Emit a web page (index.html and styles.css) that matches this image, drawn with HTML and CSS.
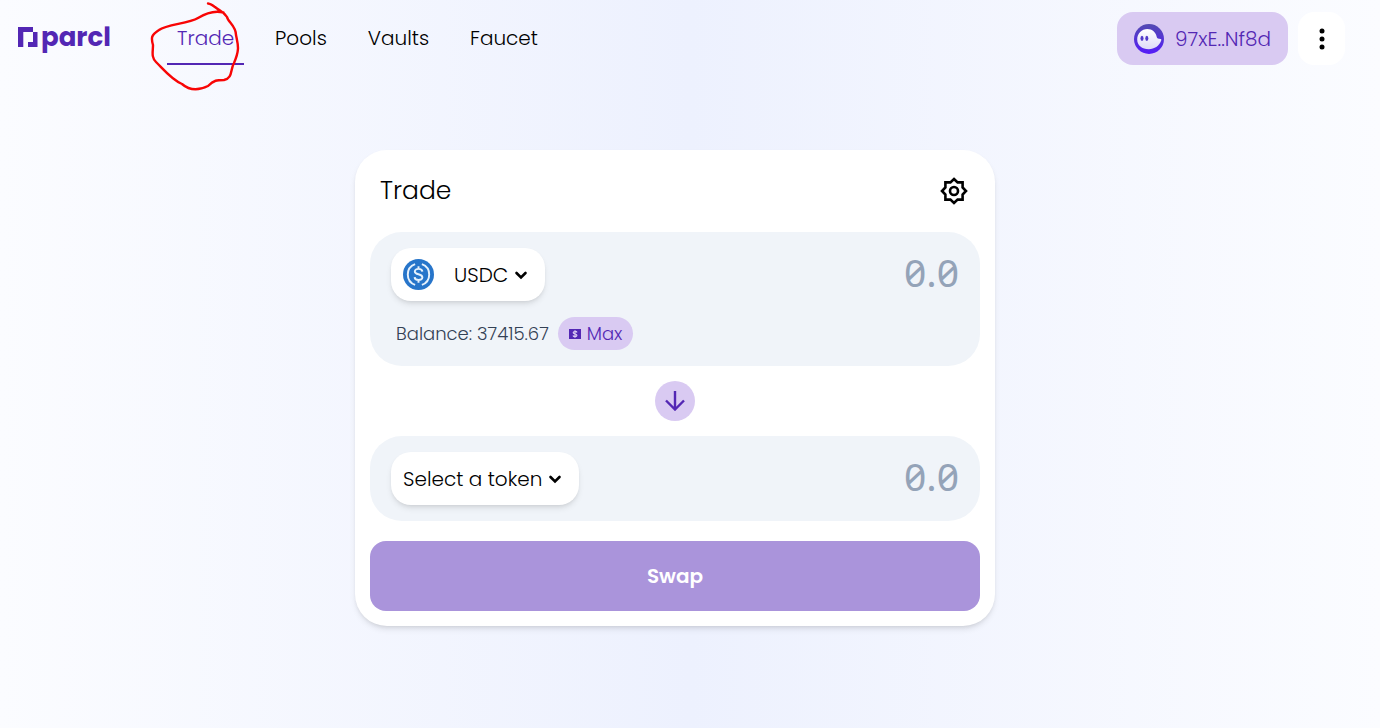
FILE: index.html
```html
<!DOCTYPE html>
<html lang="en">
<head>
<meta charset="utf-8">
<meta name="viewport" content="width=device-width, initial-scale=1">
<title>Parcl – Trade</title>
<link rel="stylesheet" href="styles.css">
</head>
<body>
<header class="topbar">
  <a class="logo" href="#" aria-label="parcl">
    <svg class="logo-mark" viewBox="0 0 20 20" aria-hidden="true"><path d="M0 0H15V5H5.300V20H0Z"/><path d="M15 5H19.500V20H10V15H15Z"/></svg>
    <span>parcl</span>
  </a>
  <nav class="nav">
    <a class="nav-link active" href="#">Trade</a>
    <a class="nav-link" href="#">Pools</a>
    <a class="nav-link" href="#">Vaults</a>
    <a class="nav-link" href="#">Faucet</a>
  </nav>
  <div class="account">
    <button class="wallet" type="button">
      <svg class="wallet-icon" viewBox="0 0 30 30" aria-hidden="true">
        <defs>
          <linearGradient id="disc" x1="0" y1="0" x2="0" y2="1"><stop offset="0" stop-color="#534bb1"/><stop offset="1" stop-color="#551bf9"/></linearGradient>
          <linearGradient id="ghost" x1="0" y1="0" x2="0" y2="1"><stop offset="0" stop-color="#ffffff"/><stop offset="1" stop-color="#dedaf8"/></linearGradient>
        </defs>
        <circle cx="15" cy="15" r="15" fill="url(#disc)"/>
        <path fill="url(#ghost)" d="M3.200 15.500C3.200 9.300 7.800 5 13.300 5C18.300 5 22 8.500 22.600 12.600C22.900 14.600 24.300 15 26.700 15C27.500 15 27.500 16 27 17C25.200 21.800 20.500 25.200 14.800 25.200C8 25.200 3.200 21.500 3.200 15.500Z"/>
        <ellipse cx="8" cy="14.300" rx="1.500" ry="2.600" fill="#5139c9"/>
        <ellipse cx="12.800" cy="14.300" rx="1.500" ry="2.600" fill="#5139c9"/>
      </svg>
      <span>97xE..Nf8d</span>
    </button>
    <button class="more" type="button" aria-label="More options">
      <svg viewBox="0 0 6 22" aria-hidden="true"><circle cx="3" cy="3" r="2.500"/><circle cx="3" cy="11" r="2.500"/><circle cx="3" cy="19" r="2.500"/></svg>
    </button>
  </div>
</header>

<svg class="scribble" viewBox="0 0 95 92" aria-hidden="true"><path d="M58 1.500C63 2 66 7 73 10.500M73.500 10.500C64 8 56 11 48 16C38 22 17 22 9 28C1 33 1 36 3 43C3 50 1 55 6 60C14 68 22 78 32 82C40 89 50 88 58 84C64 78 67 78 74 78C83 76 80 68 84 61C90 47 88 43 86 33C86 24 78 20 77 15C74 10 70 9 65 5"/></svg>

<main class="page">
  <form class="card">
    <div class="card-head">
      <h1 class="title">Trade</h1>
      <button class="settings" type="button" aria-label="Settings">
        <svg viewBox="0 0 28 28" aria-hidden="true"><path d="M14 2L17.600 5.400H22.600V10.400L26 14L22.600 17.600V22.600H17.600L14 26L10.400 22.600H5.400V17.600L2 14L5.400 10.400V5.400H10.400Z"/><circle cx="14" cy="14" r="4"/></svg>
      </button>
    </div>

    <section class="panel">
      <div class="row">
        <button class="token" type="button">
          <svg class="coin" viewBox="0 0 32 32" aria-hidden="true">
            <circle cx="16" cy="16" r="16" fill="#2775ca"/>
            <g fill="none" stroke="#e6f1fc" stroke-width="2"><path d="M12.500 5.200A11.500 11.500 0 0 0 12.500 26.800M19.500 5.200A11.500 11.500 0 0 1 19.500 26.800"/><path d="M20 13C19.700 9.300 12.200 9.300 12.200 12.800C12.200 17 20 14.500 20 19C20 22.700 12.200 22.600 12 18.700M16 7.500V10.500M16 21.500V24.500"/></g>
          </svg>
          <span>USDC</span>
          <svg class="chevron" viewBox="0 0 14 10" aria-hidden="true"><path d="M2.500 3L7 7.500L11.500 3"/></svg>
        </button>
        <input class="amount" type="text" placeholder="0.0" aria-label="Amount to sell">
      </div>
      <div class="balance">
        <span>Balance: 37415.67</span>
        <button class="max" type="button">
          <svg viewBox="0 0 12 10" aria-hidden="true"><path fill="#5327b4" d="M0 0H12V10H0Z"/><path fill="none" stroke="#d9caf2" stroke-width="1.200" d="M8 3.500C7.500 2 4.200 2.200 4.200 3.700C4.200 5.300 7.900 4.700 7.900 6.300C7.900 8 4.500 8 4 6.500M6 1.200V8.800"/></svg>
          <span>Max</span>
        </button>
      </div>
    </section>

    <button class="flip" type="button" aria-label="Switch tokens">
      <svg viewBox="0 0 20 20" aria-hidden="true"><path d="M10 0V18M1 9.500L10 18.500L19 9.500"/></svg>
    </button>

    <section class="panel">
      <div class="row">
        <button class="token" type="button">
          <span>Select a token</span>
          <svg class="chevron" viewBox="0 0 14 10" aria-hidden="true"><path d="M2.500 3L7 7.500L11.500 3"/></svg>
        </button>
        <input class="amount" type="text" placeholder="0.0" aria-label="Amount to buy">
      </div>
    </section>

    <button class="swap" type="submit">Swap</button>
  </form>
</main>
</body>
</html>
```
FILE: styles.css
```css
* { box-sizing: border-box; }

body {
  margin: 0;
  min-height: 100vh;
  padding-right: 30px;
  font-family: Poppins, Inter, sans-serif;
  font-size: 20px;
  font-weight: 300;
  line-height: 30px;
  color: #000;
  background: linear-gradient(90deg, #fbfcff 0%, #edf1fe 50%, #fbfcff 100%);
}

button, input {
  border: 0;
  margin: 0;
  padding: 0;
  font: inherit;
  color: inherit;
  background: none;
}

a { color: inherit; text-decoration: none; }
svg { display: block; fill: none; }

.topbar {
  display: flex;
  align-items: center;
  padding: 12px 5px 0 18px;
}

.logo {
  display: flex;
  align-items: center;
  gap: 3px;
  width: 149px;
  padding-bottom: 4px;
  font-size: 26px;
  font-weight: 700;
  color: #5327b4;
}
.logo-mark { width: 20px; height: 20px; fill: #5327b4; }

.nav { display: flex; gap: 21px; }
.nav-link { padding: 11px 10px 10px; border-bottom: 2px solid transparent; }
.nav-link.active { color: #5327b4; border-color: #5327b4; }

.account { display: flex; gap: 10px; margin-left: auto; }
.wallet {
  display: flex;
  align-items: center;
  gap: 11px;
  height: 53px;
  padding: 0 17px;
  border-radius: 16px;
  color: #5327b4;
  background: #d9caf2;
}
.wallet-icon { width: 30px; height: 30px; }
.more {
  display: grid;
  place-items: center;
  width: 47px;
  border-radius: 16px;
  background: #fff;
}
.more svg { width: 6px; height: 22px; fill: #000; }

.scribble {
  position: absolute;
  top: 2px;
  left: 150px;
  width: 95px;
  height: 92px;
  stroke: #f80505;
  stroke-width: 2.4;
  stroke-linecap: round;
  pointer-events: none;
}

.page {
  display: flex;
  justify-content: center;
  padding: 85px 20px 40px;
}

.card {
  display: flex;
  flex-direction: column;
  width: 100%;
  max-width: 640px;
  padding: 15px;
  border-radius: 32px;
  background: #fff;
  box-shadow: 0 4px 6px -1px rgb(0 0 0 / 10%), 0 2px 4px -2px rgb(0 0 0 / 10%);
}

.card-head {
  display: flex;
  align-items: center;
  justify-content: space-between;
  height: 52px;
  margin-bottom: 15px;
  padding: 0 12px 0 10px;
}
.title { margin: 0; font-size: 25px; font-weight: 300; }
.settings svg { width: 28px; height: 28px; stroke: #000; stroke-width: 2.6; }

.panel {
  padding: 16px 21px;
  border-radius: 32px;
  background: #f0f4f9;
}
.row { display: flex; align-items: center; justify-content: space-between; }

.token {
  display: flex;
  align-items: center;
  gap: 6px;
  height: 53px;
  padding: 0 17px 0 12px;
  border-radius: 20px;
  background: #fff;
  box-shadow: 0 4px 6px -1px rgb(0 0 0 / 10%), 0 2px 4px -2px rgb(0 0 0 / 10%);
}
.coin { width: 31px; height: 31px; margin-right: 14px; }
.chevron {
  width: 14px;
  height: 10px;
  stroke: #000;
  stroke-width: 2.6;
  stroke-linecap: round;
}

.amount {
  flex: 1;
  min-width: 0;
  padding-bottom: 6px;
  font-family: "Noto Sans", sans-serif;
  font-size: 39px;
  font-weight: 400;
  line-height: 46px;
  font-variant-numeric: slashed-zero;
  text-align: right;
  outline: 0;
}
.amount::placeholder { color: #94a3b8; opacity: 1; }

.balance {
  display: flex;
  align-items: center;
  gap: 9px;
  margin-top: 16px;
  padding-left: 5px;
  font-size: 18px;
  color: #334155;
}
.max {
  display: flex;
  align-items: center;
  gap: 6px;
  height: 33px;
  padding: 0 11px;
  border-radius: 17px;
  color: #5327b4;
  background: #d9caf2;
}
.max svg { width: 12px; height: 10px; }

.flip {
  display: grid;
  place-items: center;
  width: 40px;
  height: 40px;
  margin: 15px auto;
  border-radius: 50%;
  background: #d9caf2;
}
.flip svg { width: 20px; height: 20px; stroke: #5327b4; stroke-width: 2.4; }

.swap {
  height: 70px;
  margin-top: 20px;
  border-radius: 16px;
  font-weight: 600;
  color: #fff;
  background: #aa94db;
}
```
